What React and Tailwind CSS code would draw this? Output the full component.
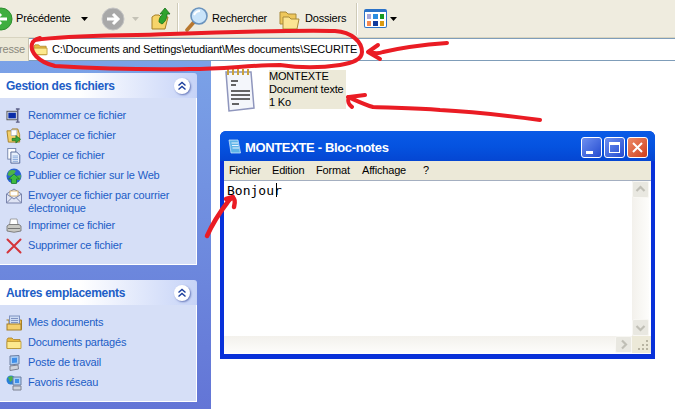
const FolderIcon = ({ size = 16 }) => (
  <svg width={size} height={size} viewBox="0 0 16 16" className="shrink-0">
    <path d="M1 4.5 L2 3 H6 L7.500 4.500 H14 V13.500 H1 Z" fill="#e8b93f" stroke="#a9812a" strokeWidth="0.8" />
    <path d="M1 6.500 H15 V13.500 H1 Z" fill="#fde98e" stroke="#b8922f" strokeWidth="0.8" />
  </svg>
)

const RenameIcon = () => (
  <svg width="16" height="16" viewBox="0 0 16 17">
    <rect x="0.500" y="3.500" width="11" height="9" fill="#dfe5ef" stroke="#555" />
    <rect x="2" y="5" width="8" height="6" fill="#0a2ca8" />
    <path d="M12 1 V15 M10 1 H14 M10 15 H14" stroke="#5b5f86" strokeWidth="1.500" fill="none" />
  </svg>
)

const MoveIcon = () => (
  <svg width="16" height="16" viewBox="0 0 16 17">
    <path d="M0.500 3 H5 L6 1 H12 L14 7 V15 H2 Z" fill="#f3cf6a" stroke="#a57f26" />
    <path d="M5 2 H11 V8 H5 Z" fill="#fff" stroke="#8a9bc0" strokeWidth="0.6" />
    <path d="M6 11 H10 V8 L15 12 L10 16 V13.500 H6 Z" fill="#3aa53a" stroke="#1c6e1c" strokeWidth="0.7" />
  </svg>
)

const CopyIcon = () => (
  <svg width="16" height="16" viewBox="0 0 16 18">
    <rect x="1" y="0.500" width="9" height="12" fill="#fff" stroke="#6d7fa8" />
    <path d="M4.500 4.500 H11 L14.500 8 V17 H4.500 Z" fill="#e8f0fb" stroke="#4a5f92" />
    <path d="M6.500 9 H12.500 M6.500 11 H12.500 M6.500 13 H12.500 M6.500 15 H12.500" stroke="#7fa3d8" />
  </svg>
)

const GlobeIcon = () => (
  <svg width="16" height="16" viewBox="0 0 16 16">
    <circle cx="8" cy="8" r="7.500" fill="#2a62d0" />
    <path d="M3 3 Q7 1 10 3 L8 6 L4 8 L1.500 7 Z M10 8 L15 7 L14 12 L11 12 Z" fill="#4eb446" />
    <path d="M8 6 L13.500 11 H10.500 V15.500 H5.500 V11 H2.500 Z" fill="#3fbb3f" stroke="#14761f" strokeWidth="0.7" />
  </svg>
)

const MailIcon = () => (
  <svg width="16" height="16" viewBox="0 0 16 16">
    <path d="M0.500 6 L8 1 L15.500 6 V15 H0.500 Z" fill="#dfe4f4" stroke="#7a84ac" />
    <rect x="4" y="3" width="8" height="5" fill="#fff" stroke="#d09a3a" strokeWidth="0.7" />
    <path d="M0.500 6 L8 11 L15.500 6 M0.500 15 L6 9.500 M15.500 15 L10 9.500" fill="none" stroke="#7a84ac" />
  </svg>
)

const PrintIcon = () => (
  <svg width="16" height="16" viewBox="0 0 16 16">
    <path d="M4.500 1 H11 L12 7 H3.500 Z" fill="#fff" stroke="#8d8d8d" strokeWidth="0.8" />
    <path d="M1 8 L3 6.500 H13 L15 8 V13 Q8 15.500 1 13 Z" fill="#c9c9c4" stroke="#6c6c6c" strokeWidth="0.8" />
    <path d="M2 10.500 H14" stroke="#777" />
  </svg>
)

const DeleteIcon = () => (
  <svg width="16" height="16" viewBox="0 0 16 16">
    <path d="M1.500 1.500 L14.500 14.500 M14.500 1.500 L1.500 14.500" stroke="#d4343a" strokeWidth="2" strokeLinecap="round" />
  </svg>
)

const DocsIcon = () => (
  <svg width="16" height="16" viewBox="0 0 16 16">
    <path d="M0.500 5 H3 V14.500 H15.500 V5 H14" fill="#edbb4c" stroke="#a57f26" />
    <rect x="3.500" y="1" width="10" height="9" fill="#cfdcf4" stroke="#7f93c2" />
    <path d="M5 3.500 H12 M5 5.500 H12 M5 7.500 H12" stroke="#7f93c2" />
    <rect x="1" y="9" width="14" height="6" fill="#f4cf6e" stroke="#a57f26" />
  </svg>
)

const ComputerIcon = () => (
  <svg width="16" height="16" viewBox="0 0 16 16">
    <path d="M4 1 L13 0.500 V9 L4 10 Z" fill="#a9cdf5" stroke="#6c7ea0" />
    <path d="M6 3 L11 2.700 V7.500 L6 8 Z" fill="#3e8ee8" />
    <path d="M4 11 L12 10 L12.500 14 L4 15.500 Z" fill="#cfd3dc" stroke="#7d8292" />
  </svg>
)

const NetworkIcon = () => (
  <svg width="16" height="16" viewBox="0 0 16 16">
    <circle cx="5" cy="5" r="4.500" fill="#2a7fd6" />
    <path d="M2 2 L6 1 L8 4 L4 7 Z" fill="#4eb446" />
    <path d="M7 2 H15 V10 H7 Z" fill="#a9cdf5" stroke="#6c7ea0" />
    <rect x="9" y="4" width="4" height="4" fill="#3e8ee8" />
    <path d="M7 11 H15 V15 H7 Z" fill="#cfd3dc" stroke="#7d8292" />
  </svg>
)

const Chevrons = () => (
  <div className="w-[16px] h-[16px] rounded-full bg-white shadow-[1px_1px_2px_rgba(60,80,160,0.7)] flex items-center justify-center">
    <svg width="10" height="10" viewBox="0 0 10 10">
      <path d="M1.500 4.500 L5 1.500 L8.500 4.500 M1.500 8.500 L5 5.500 L8.500 8.500" fill="none" stroke="#1c3f9e" strokeWidth="1.400" />
    </svg>
  </div>
)

const Caret = ({ color = "#000" }) => (
  <svg width="7" height="4" viewBox="0 0 7 4" className="shrink-0">
    <path d="M0 0 H7 L3.500 4 Z" fill={color} />
  </svg>
)

const NavCircle = ({ className, fill, stroke }) => (
  <svg width="24" height="24" viewBox="0 0 24 24" className={className}>
    <circle cx="12" cy="12" r="11" fill={fill} stroke={stroke} />
    <path d="M6 12 H16 M12 7 L17 12 L12 17" fill="none" stroke="#fff" strokeWidth="3" />
  </svg>
)

const SidePanel = ({ title, items, className }) => (
  <div className={"w-[197px] " + className}>
    <div className="h-[25px] rounded-tr-[3px] bg-gradient-to-r from-white from-40% to-[#c6d3f7] flex items-center justify-between pl-[6px] pr-[7px]">
      <span className="text-[12px] tracking-[-0.3px] mt-[1px] font-bold text-[#215dc6]">{title}</span>
      <Chevrons />
    </div>
    <div className="bg-[#d6dff7] border-b border-r border-white pt-[9px] pb-[7px]">
      {items.map(({ icon, label }) => (
        <div key={label} className="flex pl-[6px] min-h-[20px] py-[2px] leading-[13px]">
          <div className="w-[22px] shrink-0 -mt-[1px]">{icon}</div>
          <span className="text-[#215dc6] w-[165px]">{label}</span>
        </div>
      ))}
    </div>
  </div>
)

const WinButton = ({ children, className }) => (
  <div className={"w-[21px] h-[21px] rounded-[3px] border border-white flex items-center justify-center " + className}>
    {children}
  </div>
)

const ScrollBtn = ({ d }) => (
  <div className="w-[17px] h-[17px] rounded-[2px] border border-[#f8f7f3] bg-[#e9e8e1] flex items-center justify-center">
    <svg width="13" height="13" viewBox="0 0 13 13">
      <path d={d} fill="none" stroke="#c0bfb6" strokeWidth="2.200" />
    </svg>
  </div>
)

const Notepad = () => (
  <div className="absolute left-[9px] top-[70px] w-[435px] h-[228px] rounded-t-[6px] bg-[#0831d9] flex flex-col px-[4px] pb-[5px]">
    <div className="h-[30px] -mx-[4px] rounded-t-[6px] bg-gradient-to-b from-[#0a5ae6] via-[#0553e0] to-[#0546d2] flex items-center pl-[8px] pr-[7px]">
      <svg width="14" height="17" viewBox="0 0 14 17" className="shrink-0">
        <path d="M1 2 H10 L12.500 15 H3 Z" fill="#5fb4e8" stroke="#d8eefc" strokeWidth="0.7" />
        <path d="M3.500 5 H10 M4 7.500 H10.500 M4.500 10 H11" stroke="#e8f4fc" />
      </svg>
      <span className="ml-[3px] mt-[3px] text-white text-[13px] tracking-[-0.35px] leading-[16px] font-bold">MONTEXTE - Bloc-notes</span>
      <div className="ml-auto flex gap-[2px] mt-[2px]">
        <WinButton className="bg-gradient-to-br from-[#6f8ff0] to-[#2549cf] items-end pb-[3px] justify-start pl-[4px]">
          <div className="w-[7px] h-[3px] bg-white" />
        </WinButton>
        <WinButton className="bg-gradient-to-br from-[#6f8ff0] to-[#2549cf]">
          <div className="w-[11px] h-[11px] border border-white border-t-[3px]" />
        </WinButton>
        <WinButton className="bg-gradient-to-br from-[#ec8a68] to-[#cf3c16]">
          <svg width="11" height="11" viewBox="0 0 11 11">
            <path d="M1 1 L10 10 M10 1 L1 10" stroke="#fff" strokeWidth="2" />
          </svg>
        </WinButton>
      </div>
    </div>
    <div className="h-[20px] bg-[#ece9d8] border-b border-[#a4afc0] flex items-center text-black">
      <span className="ml-[5px] w-[43px]">Fichier</span>
      <span className="w-[44px]">Edition</span>
      <span className="w-[46px]">Format</span>
      <span className="w-[61px]">Affichage</span>
      <span>?</span>
    </div>
    <div className="flex-1 flex flex-col bg-white min-h-0">
      <div className="flex-1 flex min-h-0">
        <div className="flex-1 relative font-['DejaVu_Sans_Mono',monospace] tracking-normal text-[13px] leading-[15px] pl-[3px] pt-[2px] text-black">
          Bonjour
          <div className="absolute left-[52px] top-[2px] w-px h-[14px] bg-black" />
        </div>
        <div className="w-[17px] mr-[2px] bg-gradient-to-r from-[#f3f1ec] to-[#fdfdfb] flex flex-col justify-between">
          <ScrollBtn d="M2.500 8 L6.500 4 L10.500 8" />
          <ScrollBtn d="M2.500 5 L6.500 9 L10.500 5" />
        </div>
      </div>
      <div className="h-[17px] flex mb-px">
        <div className="flex-1 bg-gradient-to-b from-[#f3f1ec] to-[#fdfdfb] flex justify-end">
          <ScrollBtn d="M5 2.500 L9 6.500 L5 10.500" />
        </div>
        <div className="w-[19px] bg-[#ece9d8] flex items-end justify-end pr-[2px] pb-[2px]">
          <svg width="12" height="12" viewBox="0 0 12 12">
            <path d="M9 1 h2 v2 h-2 Z M5 5 h2 v2 h-2 Z M9 5 h2 v2 h-2 Z M1 9 h2 v2 h-2 Z M5 9 h2 v2 h-2 Z M9 9 h2 v2 h-2 Z" fill="#b8b4a2" />
          </svg>
        </div>
      </div>
    </div>
  </div>
)

const Annotations = () => (
  <svg width="675" height="409" viewBox="0 0 675 409" className="absolute inset-0 pointer-events-none">
    <g fill="none" stroke="#ea1c24" strokeWidth="4" strokeLinecap="round" strokeLinejoin="round">
      <path d="M35 40 C70 35 120 36 170 34 C230 32 300 30 335 31 C352 32 362 42 362 52 C362 60 352 63 340 65 C320 68 300 68 280 65 C250 65 225 69 190 69 C140 70 90 68 55 66 C38 62 30 52 32 44 C33 40 36 39 40 38" />
      <path d="M447 43 C420 45 400 48 383 52 C378 54 372 53 368 52 M378 45 L368 52 L380 59" />
      <path d="M540 120 C510 116 480 112 440 110 C415 108 395 108 373 107 C365 105 355 100 348 97 M365 95 L349 97 C347 101 349 105 352 107" />
      <path strokeWidth="4.500" d="M207 236 C212 225 220 212 227 203 C229 200 231 198 233 198 C235 199 235 203 234 207 M226 199 L233 197" />
    </g>
  </svg>
)

const taskItems = [
  { icon: <RenameIcon />, label: "Renommer ce fichier" },
  { icon: <MoveIcon />, label: "Déplacer ce fichier" },
  { icon: <CopyIcon />, label: "Copier ce fichier" },
  { icon: <GlobeIcon />, label: "Publier ce fichier sur le Web" },
  { icon: <MailIcon />, label: "Envoyer ce fichier par courrier électronique" },
  { icon: <PrintIcon />, label: "Imprimer ce fichier" },
  { icon: <DeleteIcon />, label: "Supprimer ce fichier" },
]

const placeItems = [
  { icon: <DocsIcon />, label: "Mes documents" },
  { icon: <FolderIcon />, label: "Documents partagés" },
  { icon: <ComputerIcon />, label: "Poste de travail" },
  { icon: <NetworkIcon />, label: "Favoris réseau" },
]

export default function App() {
  return (
    <div className="relative w-[675px] h-[409px] overflow-hidden flex flex-col bg-white font-['Liberation_Sans',sans-serif] text-[11px] tracking-[-0.18px]">
      {/* toolbar */}
      <div className="h-[38px] bg-[#efecdf] border-b border-[#d8d4c0] flex items-center text-black">
        <NavCircle className="-ml-[11px] rotate-180" fill="#3fae3f" stroke="#2f8f2f" />
        <span className="ml-[3px] w-[56px]">Précédente</span>
        <div className="ml-[9px]"><Caret /></div>
        <NavCircle className="ml-[13px]" fill="#a8a8a8" stroke="#c4c4c4" />
        <div className="ml-[7px]"><Caret color="#c4c2b6" /></div>
        <svg width="22" height="24" viewBox="0 0 22 24" className="ml-[11px]">
          <path d="M2 10 L5 8 H9 L11 10 H18 L15 22 H2 Z" fill="#f6d469" stroke="#a57f26" />
          <path d="M9 15 C9 10 12 8 13 7 L10 7 L15 1 L20 7 L17 7 C17 12 15 15 12 17 Z" fill="#2ea32e" stroke="#17701a" strokeWidth="0.8" />
        </svg>
        <div className="ml-[5px] w-[2px] h-[32px] bg-[#cfcbb8] border-r border-white" />
        <svg width="24" height="26" viewBox="0 0 24 26" className="ml-[6px]">
          <path d="M9 16 L2 24" stroke="#b8772e" strokeWidth="3.500" strokeLinecap="round" />
          <circle cx="14" cy="10" r="8" fill="#c9e4fa" stroke="#6a93bd" strokeWidth="1.600" />
          <path d="M9 9 Q11 5 15 5" fill="none" stroke="#fff" strokeWidth="2" />
        </svg>
        <span className="ml-[3px] w-[55px]">Rechercher</span>
        <svg width="22" height="22" viewBox="0 0 22 22" className="ml-[12px]">
          <path d="M1 4 H7 L9 6 H17 V16 H1 Z" fill="#eec75c" stroke="#a98a3a" />
          <path d="M4 9 H10 L12 11 H20 L18 21 H4 Z" fill="#fbe493" stroke="#a98a3a" />
        </svg>
        <span className="ml-[4px] w-[41px]">Dossiers</span>
        <div className="ml-[10px] w-[2px] h-[32px] bg-[#cfcbb8] border-r border-white" />
        <div className="ml-[6px] w-[23px] h-[19px] rounded-[2px] bg-white border border-[#2a72c8] border-t-[3px] grid grid-cols-3 gap-x-[2px] gap-y-[2px] p-[2px]">
          {["#a6a6d8", "#2a8ce0", "#159a20", "#f58a50", "#123a9c", "#d89a14"].map(c => (
            <div key={c} className="h-[5px]" style={{ background: c }} />
          ))}
        </div>
        <div className="ml-[3px]"><Caret /></div>
      </div>

      {/* address bar */}
      <div className="h-[23px] flex bg-white">
        <div className="w-[29px] bg-[#ece9d8] border-r border-[#c8c4b0] flex items-center justify-end pr-[3px] text-[#8a887c] overflow-hidden">resse</div>
        <div className="flex-1 border-y border-[#7f9db9] flex items-center pl-[4px] gap-[4px] text-black">
          <FolderIcon size={15} />
          <span>C:\Documents and Settings\etudiant\Mes documents\SECURITE</span>
        </div>
      </div>

      <div className="flex-1 flex min-h-0">
        {/* tasks */}
        <div className="w-[211px] shrink-0 bg-gradient-to-b from-[#7ba2e7] to-[#6375d6] pt-[12px]">
          <SidePanel title="Gestion des fichiers" items={taskItems} />
          <SidePanel title="Autres emplacements" items={placeItems} className="mt-[15px]" />
        </div>

        {/* files */}
        <div className="relative flex-1 pl-[14px] pt-[7px]">
          <div className="flex gap-[14px]">
            <svg width="30" height="44" viewBox="0 0 30 44">
              <path d="M1 4 H26 L29 40 L4 43 Z" fill="#f4f6fb" stroke="#8f96bd" strokeWidth="1.500" />
              <path d="M3 1 V7 M8 1 V7 M13 1 V7 M18 1 V7 M23 1 V7" stroke="#c9a23a" strokeWidth="2" />
              <path d="M6 13 H13 M6 17 H11 M6 23 H25 M6 27 H25 M6 31 H25 M7 36 H14" stroke="#333" strokeWidth="1.400" />
            </svg>
            <div className="mt-[2px] h-[39px] w-[77px] bg-[#ece9d8] leading-[13px] text-black whitespace-nowrap">
              MONTEXTE<br />Document texte<br />1 Ko
            </div>
          </div>
          <Notepad />
        </div>
      </div>

      <Annotations />
    </div>
  )
}
